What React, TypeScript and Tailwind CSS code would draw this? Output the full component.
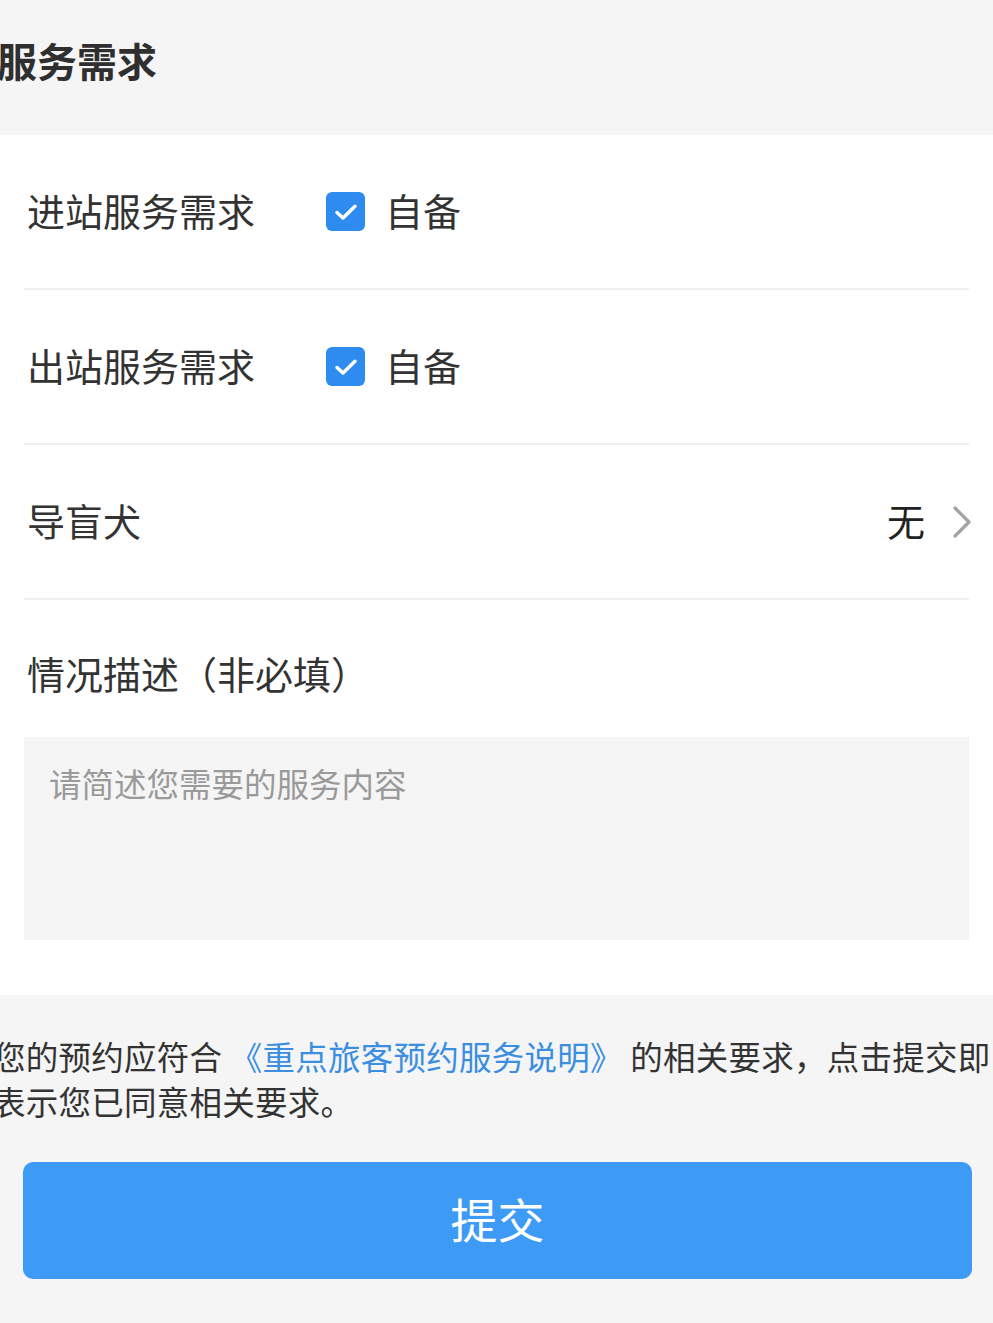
import React from "react";

const FONT = { fontFamily: '"Noto Sans CJK SC", "Noto Sans", sans-serif' };

function CheckBox() {
  return (
    <span className="flex h-[39px] w-[39px] items-center justify-center rounded-[6px] bg-[#2e8cf0]">
      <svg width="30" height="30" viewBox="0 0 24 24" fill="none">
        <path d="M4.8 12.4l4.8 4.4 9.6-9.4" stroke="#fff" strokeWidth="2.8" strokeLinecap="round" strokeLinejoin="round" />
      </svg>
    </span>
  );
}

function CheckRow({ label }: { label: string }) {
  return (
    <div className="flex h-[155px] items-center border-b-2 border-[#efefef] pl-[3px]">
      <span className="mb-[4px] w-[299px] text-[38px] leading-none text-[#333]">{label}</span>
      <CheckBox />
      <span className="mb-[4px] ml-[20px] text-[38px] leading-none text-[#333]">自备</span>
    </div>
  );
}

export default function App() {
  return (
    <div className="min-h-[1323px] w-[993px] overflow-hidden bg-[#f5f5f5]" style={FONT}>
      <header className="flex h-[135px] items-center pb-[16px]">
        <h1 className="ml-[-3px] text-[40px] font-bold leading-none text-[#2f2f2f]">服务需求</h1>
      </header>

      <section className="bg-white px-[24px] pb-[55px]">
        <CheckRow label="进站服务需求" />
        <CheckRow label="出站服务需求" />
        <div className="flex h-[155px] items-center justify-between border-b-2 border-[#efefef] pl-[3px]">
          <span className="mb-[4px] text-[38px] leading-none text-[#333]">导盲犬</span>
          <span className="flex items-center gap-[27px]">
            <span className="mb-[4px] text-[38px] leading-none text-[#222]">无</span>
            <svg width="20" height="34" viewBox="0 0 20 34" fill="none" className="mr-[-3px]">
              <path d="M3 3l14 14L3 31" stroke="#a3a3a3" strokeWidth="3.2" strokeLinecap="round" strokeLinejoin="round" />
            </svg>
          </span>
        </div>
        <div className="pl-[3px] pt-[50px] text-[38px] leading-[46px] text-[#333]">情况描述（非必填）</div>
        <div className="mt-[41px] h-[203px] bg-[#f5f5f5] pl-[25px] pr-[24px] pt-[26px]">
          <span className="text-[32.5px] leading-[40px] text-[#9a9a9a]">请简述您需要的服务内容</span>
        </div>
      </section>

      <footer className="px-[23px] pb-[43px] pt-[38px]">
        <p className="ml-[-30px] whitespace-nowrap text-[32.5px] leading-[45px] tracking-[0.25px] text-[#333]">
          您的预约应符合 <span className="text-[#3b8ee0]">《重点旅客预约服务说明》</span> 的相关要求，点击提交即
          <br />
          表示您已同意相关要求。
        </p>
        <button className="mt-[39px] flex h-[117px] w-[949px] items-center justify-center rounded-[10px] bg-[#3d9af5] pb-[6px] text-[47px] leading-none text-white">
          提交
        </button>
      </footer>
    </div>
  );
}
